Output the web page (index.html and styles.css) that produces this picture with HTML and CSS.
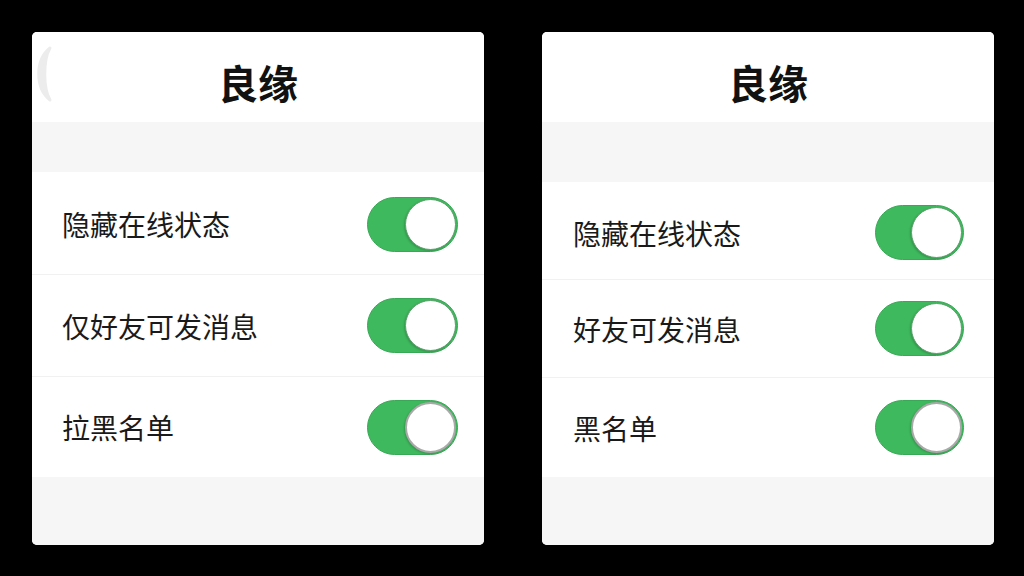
FILE: index.html
```html
<!DOCTYPE html>
<html lang="zh-CN">
<head>
<meta charset="utf-8">
<title>良缘</title>
<link rel="stylesheet" href="styles.css">
</head>
<body>
<main class="stage">
  <section class="card card--a">
    <header class="card__head">
      <svg class="back" width="24" height="60" viewBox="0 0 24 60" aria-hidden="true">
        <path d="M18 3 C3 15 3 43 18 55 C11 43 11 15 18 3 Z" fill="#ececec" stroke="#ececec" stroke-width="3" stroke-linejoin="round"/>
      </svg>
      <h1 class="card__title">良缘</h1>
    </header>
    <div class="band band--top"></div>
    <ul class="list">
      <li class="row row--1"><span class="row__label">隐藏在线状态</span><span class="toggle"><span class="knob"></span></span></li>
      <li class="row row--2"><span class="row__label">仅好友可发消息</span><span class="toggle"><span class="knob"></span></span></li>
      <li class="row row--3"><span class="row__label">拉黑名单</span><span class="toggle"><span class="knob knob--grey"></span></span></li>
    </ul>
    <div class="band band--bottom"></div>
  </section>

  <section class="card card--b">
    <header class="card__head">
      <h1 class="card__title">良缘</h1>
    </header>
    <div class="band band--top"></div>
    <ul class="list">
      <li class="row row--1"><span class="row__label">隐藏在线状态</span><span class="toggle"><span class="knob"></span></span></li>
      <li class="row row--2"><span class="row__label">好友可发消息</span><span class="toggle"><span class="knob"></span></span></li>
      <li class="row row--3"><span class="row__label">黑名单</span><span class="toggle"><span class="knob knob--grey"></span></span></li>
    </ul>
    <div class="band band--bottom"></div>
  </section>
</main>
</body>
</html>
```

FILE: styles.css
```css
* { box-sizing: border-box; }

html, body {
  margin: 0;
  padding: 0;
  background: #000;
}

body {
  width: 1024px;
  height: 576px;
  overflow: hidden;
  font-family: "Noto Sans CJK SC", "Noto Sans", sans-serif;
  color: #1a1a1a;
}

.stage {
  display: flex;
  gap: 58px;
  padding: 32px 0 0 32px;
}

.card {
  width: 452px;
  height: 513px;
  background: #fff;
  border-radius: 5px;
  overflow: hidden;
  display: flex;
  flex-direction: column;
}

.card__head {
  position: relative;
  height: 90px;
  flex: none;
  display: flex;
  align-items: center;
  justify-content: center;
  padding-top: 10px;
  background: #fff;
}

.back {
  position: absolute;
  left: 0;
  top: 13px;
}

.card__title {
  margin: 0;
  font-size: 40px;
  font-weight: 700;
  line-height: 1;
  color: #111;
}

.band {
  background: #f6f6f6;
  flex: none;
}

.band--top { height: 50px; }
.card--b .band--top { height: 60px; }

.band--bottom { flex: 1; }

.list {
  list-style: none;
  margin: 0;
  padding: 0;
  flex: none;
}

.row {
  display: flex;
  align-items: center;
  justify-content: space-between;
  padding: 0 26px 0 30px;
  background: #fff;
  border-bottom: 1px solid #f1f1f1;
}

.row:last-child { border-bottom: 0; }

.card--a .row--1 { height: 103px; padding-top: 2px; }
.card--a .row--2 { height: 102px; }
.card--a .row--3 { height: 100px; }

.card--b .row { padding-right: 30px; padding-left: 31px; }
.card--b .row--1 { height: 98px; padding-top: 4px; }
.card--b .row--2 { height: 98px; }
.card--b .row--3 { height: 99px; }

.row__label {
  font-size: 28px;
  line-height: 1;
  color: #1a1a1a;
}

.toggle {
  width: 91px;
  height: 55px;
  border-radius: 28px;
  background: #3eb95d;
  border: 1px solid #38a955;
  display: flex;
  align-items: center;
  justify-content: flex-end;
  padding-right: 1px;
}

.card--b .toggle { width: 89px; }

.knob {
  width: 51px;
  height: 51px;
  border-radius: 50%;
  background: #fff;
  border: 1.5px solid #5f9e6d;
  box-shadow: -1px 1px 2px rgba(0, 0, 0, 0.18);
}

.knob--grey {
  border: 2px solid #a9a9a9;
}
```
